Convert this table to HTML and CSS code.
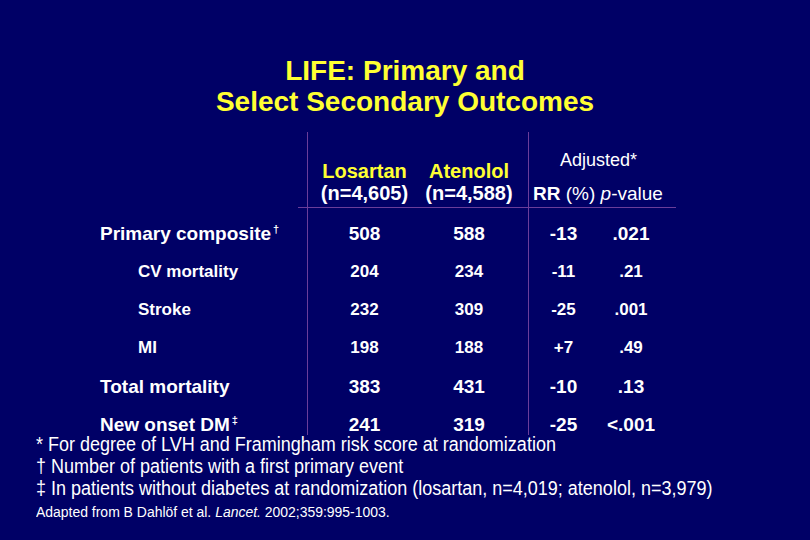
FILE: index.html
```html
<!DOCTYPE html>
<html>
<head>
<meta charset="utf-8">
<link rel="stylesheet" href="styles.css">
</head>
<body>
<div class="slide">
  <h1 class="title">LIFE: Primary and<br>Select Secondary Outcomes</h1>

  <div class="table">
    <div class="c1"></div>
    <div class="hd c2 rule-l"><div class="yel">Losartan</div><div>(n=4,605)</div></div>
    <div class="hd c3"><div class="yel">Atenolol</div><div>(n=4,588)</div></div>
    <div class="hd c45 rule-l"><div class="adj">Adjusted*</div><div class="rr"><b>RR</b> (%) <i>p</i>-value</div></div>

    <div class="c1"></div>
    <div class="hrule"></div>

    <div class="lab main r1">Primary composite<sup>†</sup></div>
    <div class="num main r1 c2 rule-l">508</div>
    <div class="num main r1 c3">588</div>
    <div class="num main r1 c4 rule-l">-13</div>
    <div class="num main r1 c5">.021</div>

    <div class="lab sub">CV mortality</div>
    <div class="num sub c2 rule-l">204</div>
    <div class="num sub c3">234</div>
    <div class="num sub c4 rule-l">-11</div>
    <div class="num sub c5">.21</div>

    <div class="lab sub">Stroke</div>
    <div class="num sub c2 rule-l">232</div>
    <div class="num sub c3">309</div>
    <div class="num sub c4 rule-l">-25</div>
    <div class="num sub c5">.001</div>

    <div class="lab sub">MI</div>
    <div class="num sub c2 rule-l">198</div>
    <div class="num sub c3">188</div>
    <div class="num sub c4 rule-l">+7</div>
    <div class="num sub c5">.49</div>

    <div class="lab main r5">Total mortality</div>
    <div class="num main r5 c2 rule-l">383</div>
    <div class="num main r5 c3">431</div>
    <div class="num main r5 c4 rule-l">-10</div>
    <div class="num main r5 c5">.13</div>

    <div class="lab main r6">New onset DM<sup>‡</sup></div>
    <div class="num main r6 c2 rule-l">241</div>
    <div class="num main r6 c3">319</div>
    <div class="num main r6 c4 rule-l">-25</div>
    <div class="num main r6 c5">&lt;.001</div>
  </div>

  <div class="notes">
    <p>* For degree of LVH and Framingham risk score at randomization</p>
    <p>† Number of patients with a first primary event</p>
    <p>‡ In patients without diabetes at randomization (losartan, n=4,019; atenolol, n=3,979)</p>
    <p class="src">Adapted from B Dahlöf et al. <i>Lancet.</i> 2002;359:995-1003.</p>
  </div>
</div>
</body>
</html>
```

FILE: styles.css
```css
html, body {
  margin: 0;
  padding: 0;
  background: #000066;
}
.slide {
  width: 810px;
  height: 540px;
  overflow: hidden;
  background: #000066;
  color: #ffffff;
  font-family: "Liberation Sans", Arial, sans-serif;
  padding-top: 55px;
  box-sizing: border-box;
}
.title {
  margin: 0;
  font-size: 28px;
  line-height: 31px;
  font-weight: bold;
  color: #ffff33;
  text-align: center;
}
.table {
  margin: 15px 0 0 100px;
  display: grid;
  grid-template-columns: 207px 114px 107px 70px 78px;
  font-weight: bold;
}
.rule-l {
  border-left: 1px solid #6a3d9a;
}
.hd {
  height: 75px;
  box-sizing: border-box;
  display: flex;
  flex-direction: column;
  justify-content: flex-end;
  padding-bottom: 2px;
  font-size: 20px;
  line-height: 23px;
  text-align: center;
}
.yel {
  color: #ffff33;
  line-height: 21px;
}
.c3 { padding-right: 11px; }
.c5 { padding-right: 12px; }
.c45 {
  grid-column: span 2;
  text-align: left;
}
.adj {
  font-weight: normal;
  font-size: 18px;
  text-align: center;
  padding-right: 8px;
  margin-bottom: 10px;
}
.rr {
  font-size: 19px;
  font-weight: normal;
  padding-left: 4px;
}
.rr b { font-weight: bold; }
.hrule {
  grid-column: 2 / span 4;
  height: 1px;
  background: #6a3d9a;
  margin-left: -9px;
}
.lab { text-align: left; }
.num { text-align: center; }
.main {
  font-size: 19px;
  line-height: 38px;
}
.sub {
  font-size: 17px;
  line-height: 38px;
}
.lab.sub { padding-left: 38px; }
.r1 { padding-top: 7px; }
.r5 { line-height: 39px; }
.r6 {
  line-height: 20px;
  padding-top: 9px;
}
.main sup {
  font-size: 11px;
  vertical-align: 7px;
  line-height: 0;
  margin-left: 2px;
}
.notes {
  margin-top: -2px;
  padding-left: 36px;
  font-family: "Liberation Sans", Arial, sans-serif;
  font-size: 20px;
  line-height: 22px;
  transform: scaleX(0.9);
  transform-origin: 36px 0;
  white-space: nowrap;
}
.notes p { margin: 0; }
.notes .src {
  font-size: 15.5px;
  margin-top: 2px;
}
```
